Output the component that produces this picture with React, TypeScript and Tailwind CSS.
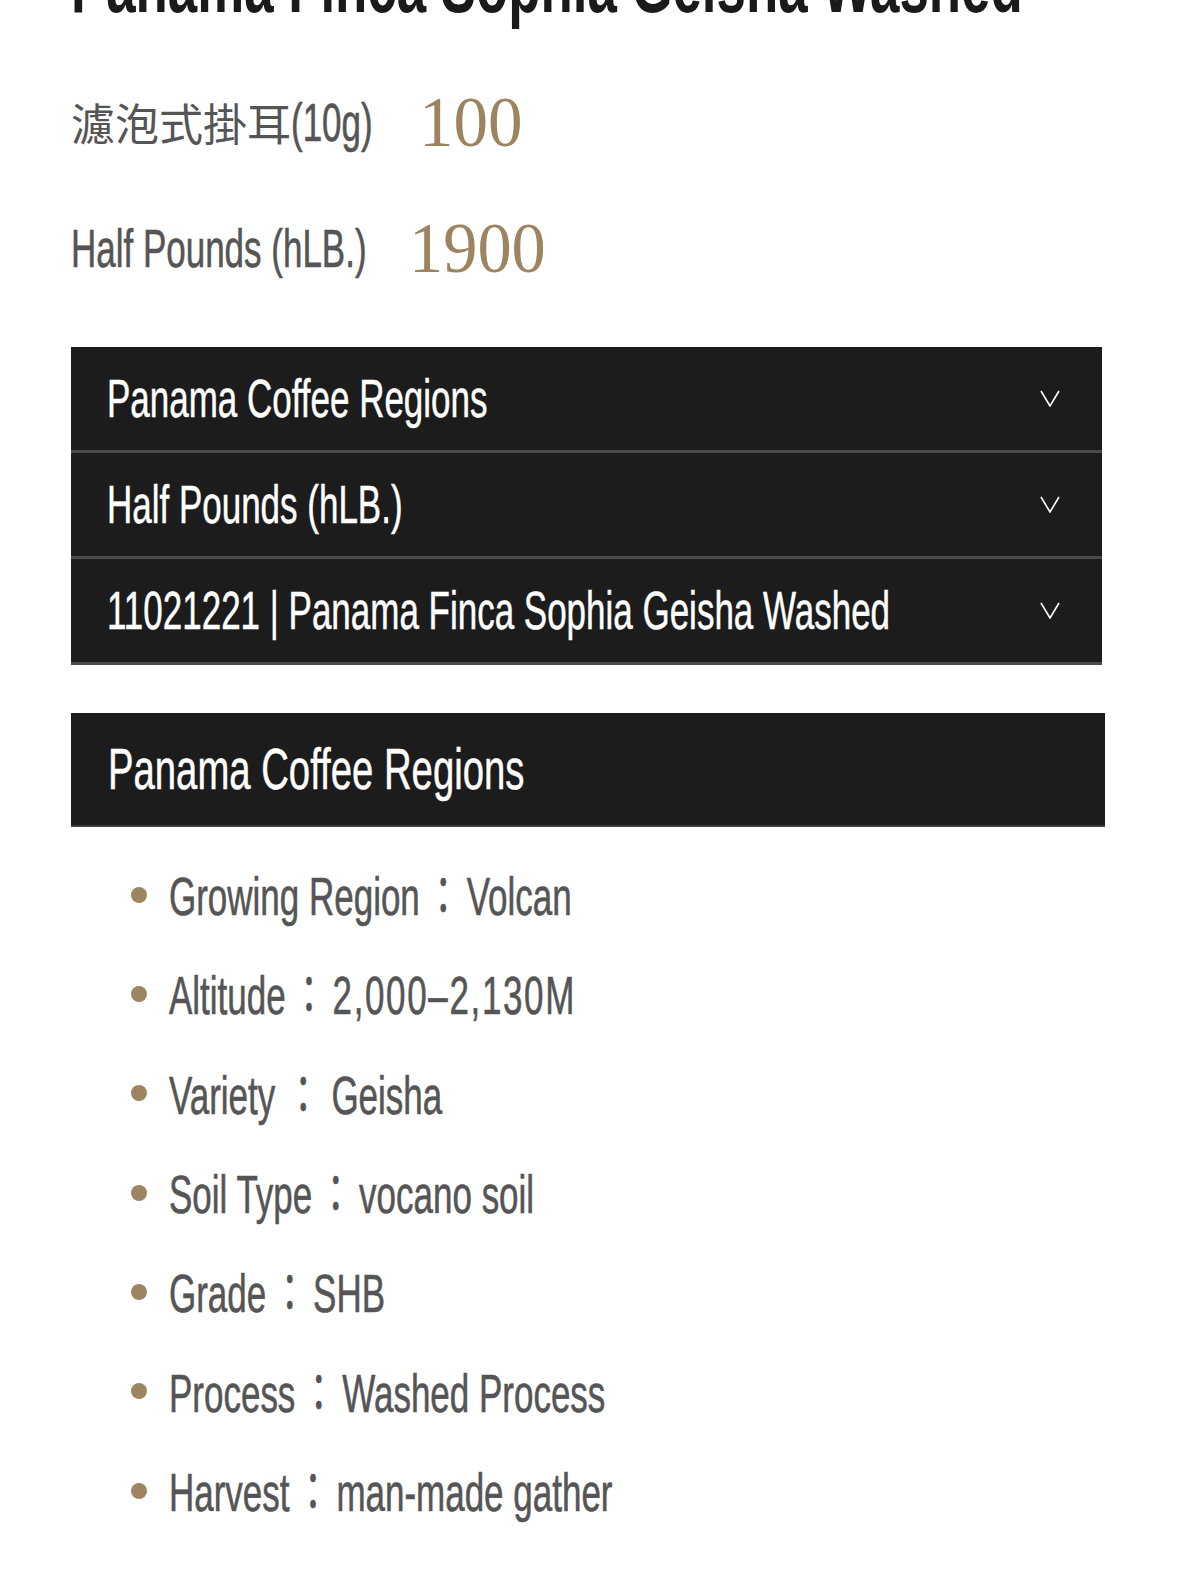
import React from "react";

function C({ children }: { children: React.ReactNode }) {
  return (
    <span className="inline-block origin-left scale-x-[0.66] whitespace-nowrap">
      {children}
    </span>
  );
}

function Chevron() {
  return (
    <svg width="20" height="17" viewBox="0 0 20 17" className="shrink-0">
      <polyline
        points="1,1 10,16 19,1"
        fill="none"
        stroke="white"
        strokeWidth="1.6"
        strokeLinejoin="miter"
      />
    </svg>
  );
}

const rows = [
  "Panama Coffee Regions",
  "Half Pounds (hLB.)",
  "11021221 | Panama Finca Sophia Geisha Washed",
];

const items: { label: string; value: string; wide?: boolean; digits?: boolean }[] = [
  { label: "Growing Region", value: "Volcan" },
  { label: "Altitude", value: "2,000–2,130M", digits: true },
  { label: "Variety", value: "Geisha", wide: true },
  { label: "Soil Type", value: "vocano soil" },
  { label: "Grade", value: "SHB" },
  { label: "Process", value: "Washed Process" },
  { label: "Harvest", value: "man-made gather" },
];

export default function App() {
  return (
    <div className="w-[1179px] min-h-[1572px] bg-white overflow-hidden flex flex-col font-['Liberation_Sans','Noto_Sans_CJK_TC',sans-serif]">
      <div className="pl-[71px] flex flex-col">
        <h1 className="mt-[-55px] text-[80px] leading-none font-bold text-[#1a1a1a] whitespace-nowrap">
          <span className="inline-block origin-left scale-x-[0.66]">
            Panama Finca Sophia Geisha Washed
          </span>
        </h1>

        <div className="mt-[47px] h-[100px] flex items-center text-[#555555]">
          <span className="shrink-0 text-[44px] leading-none font-['Noto_Sans_CJK_TC',sans-serif]">
            濾泡式掛耳
          </span>
          <span className="w-[88px] shrink-0 text-[53px] leading-none [-webkit-text-stroke:0.6px_#555555]">
            <C>(10g)</C>
          </span>
          <span className="ml-[40px] text-[72px] leading-none text-[#9c8460] font-['Liberation_Serif',serif]">
            <span className="inline-block origin-left scale-x-[0.96]">100</span>
          </span>
        </div>

        <div className="mt-[26px] h-[100px] flex items-center text-[#555555]">
          <span className="w-[296px] shrink-0 text-[53px] leading-none [-webkit-text-stroke:0.6px_#555555]">
            <C>Half Pounds (hLB.)</C>
          </span>
          <span className="ml-[42px] text-[72px] leading-none text-[#9c8460] font-['Liberation_Serif',serif]">
            <span className="inline-block origin-left scale-x-[0.95]">1900</span>
          </span>
        </div>

        <div className="mt-[49px] w-[1031px] flex flex-col">
          {rows.map((r) => (
            <div
              key={r}
              className="h-[106px] border-b-[3px] border-[#4a4a4a] bg-[#1c1c1c] flex items-center pl-[36px] pr-[42px]"
            >
              <span className="flex-1 min-w-0 text-[53px] leading-none text-white [-webkit-text-stroke:0.5px_#ffffff]">
                <C>{r}</C>
              </span>
              <Chevron />
            </div>
          ))}
        </div>

        <div className="mt-[48px] w-[1034px] h-[114px] bg-[#1c1c1c] border-b-2 border-[#3a3a3a] flex items-center pl-[37px]">
          <span className="text-[58px] leading-none text-white [-webkit-text-stroke:0.5px_#ffffff]">
            <C>Panama Coffee Regions</C>
          </span>
        </div>

        <ul className="mt-[18px] flex flex-col">
          {items.map((it) => (
            <li key={it.label} className="h-[99.33px] flex items-center pl-[60px]">
              <span className="w-[16px] h-[16px] shrink-0 rounded-full bg-[#9d8561]" />
              <span className="ml-[22px] text-[53px] leading-none text-[#555555] [-webkit-text-stroke:0.6px_#555555]">
                <C>
                  {it.label}
                  <span
                    className={
                      it.wide
                        ? "inline-block w-[85px] text-center font-['Noto_Sans_CJK_TC',sans-serif]"
                        : "inline-block w-[71px] text-center font-['Noto_Sans_CJK_TC',sans-serif]"
                    }
                  >
                    ：
                  </span>
                  <span className={it.digits ? "tracking-[2.5px]" : ""}>{it.value}</span>
                </C>
              </span>
            </li>
          ))}
        </ul>
      </div>
    </div>
  );
}
